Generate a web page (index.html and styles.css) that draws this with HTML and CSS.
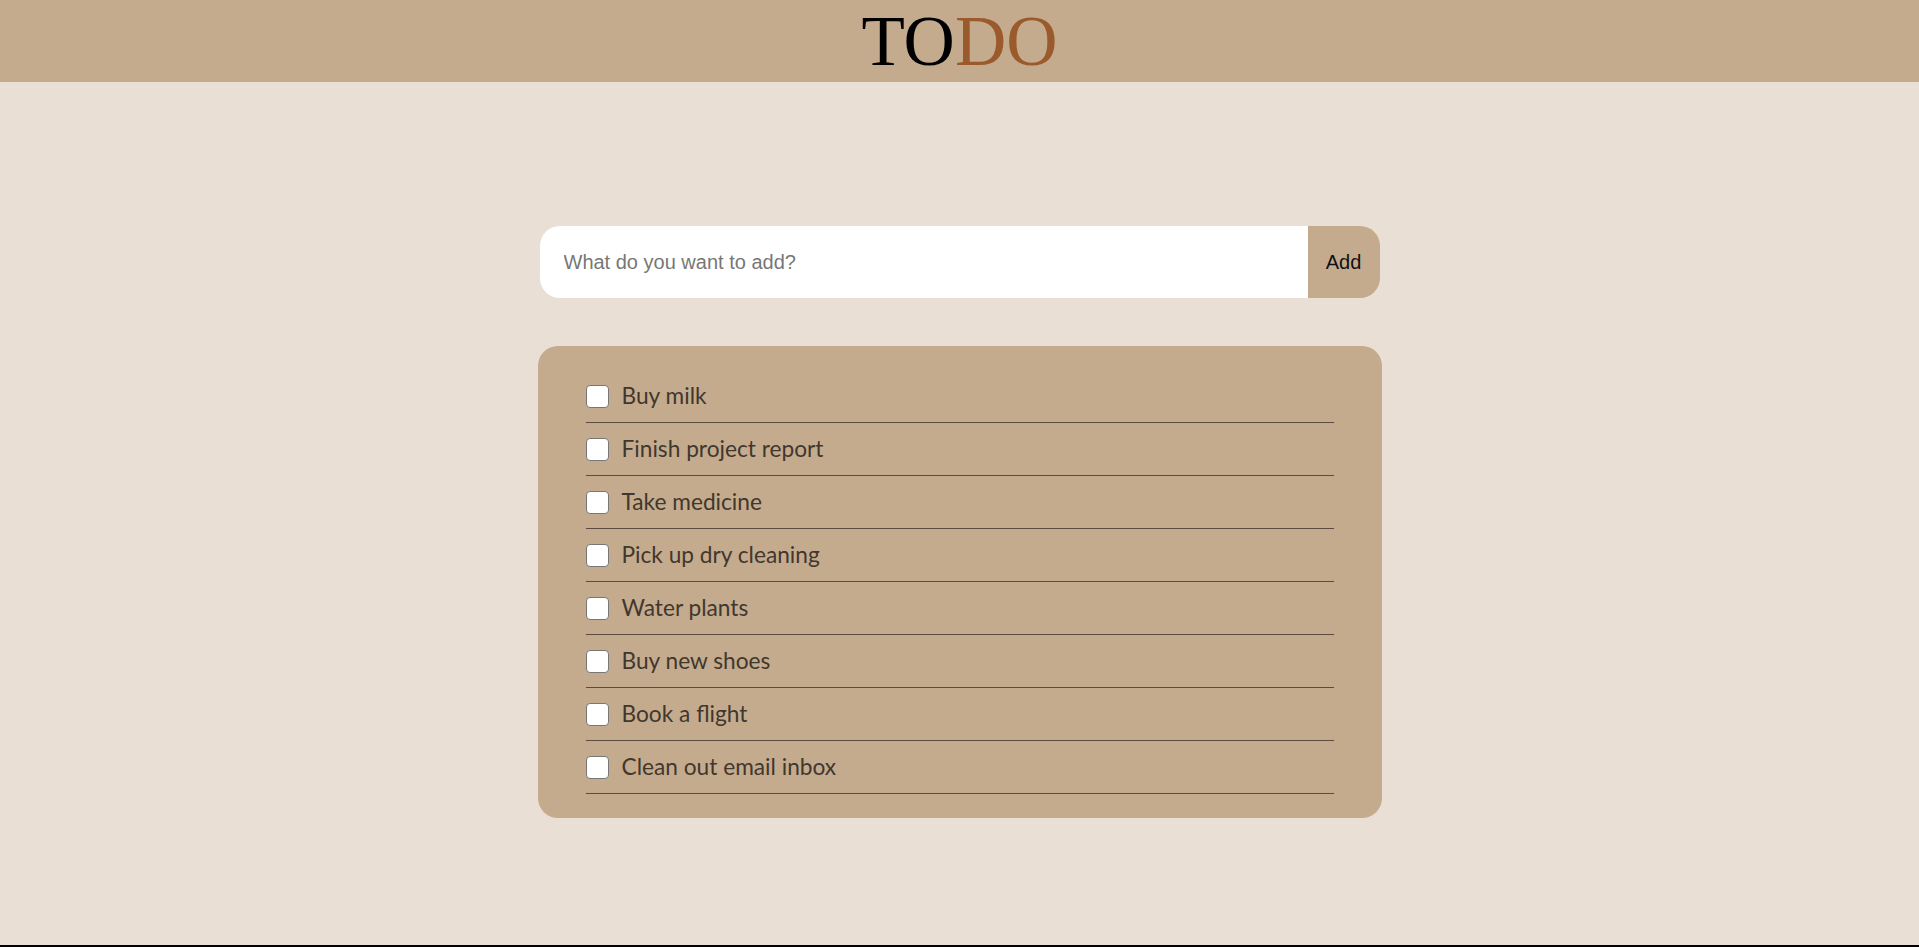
FILE: index.html
```html
<!DOCTYPE html>
<html lang="en">
<head>
<meta charset="utf-8">
<title>TODO</title>
<link rel="stylesheet" href="styles.css">
</head>
<body>
<div class="page">
  <header class="topbar">
    <h1 class="title">TO<span class="accent">DO</span></h1>
  </header>
  <main class="main">
    <form class="add-form">
      <input class="add-input" type="text" placeholder="What do you want to add?">
      <button class="add-btn" type="button">Add</button>
    </form>
    <ul class="todo-list">
      <li class="todo-item"><input class="check" type="checkbox"><span class="label">Buy milk</span></li>
      <li class="todo-item"><input class="check" type="checkbox"><span class="label">Finish project report</span></li>
      <li class="todo-item"><input class="check" type="checkbox"><span class="label">Take medicine</span></li>
      <li class="todo-item"><input class="check" type="checkbox"><span class="label">Pick up dry cleaning</span></li>
      <li class="todo-item"><input class="check" type="checkbox"><span class="label">Water plants</span></li>
      <li class="todo-item"><input class="check" type="checkbox"><span class="label">Buy new shoes</span></li>
      <li class="todo-item"><input class="check" type="checkbox"><span class="label">Book a flight</span></li>
      <li class="todo-item"><input class="check" type="checkbox"><span class="label">Clean out email inbox</span></li>
    </ul>
  </main>
  <footer class="bottom-line"></footer>
</div>
</body>
</html>
```

FILE: styles.css
```css
* { box-sizing: border-box; }
html, body { margin: 0; padding: 0; }
body {
  background: #e9dfd5;
  font-family: "Lato", "Liberation Sans", sans-serif;
}
.page {
  min-height: 100vh;
  display: flex;
  flex-direction: column;
}
.topbar {
  height: 82px;
  background: #c5ab8d;
  display: flex;
  align-items: center;
  justify-content: center;
}
.title {
  margin: 0;
  font-family: "Liberation Serif", "Times New Roman", serif;
  font-weight: 400;
  font-size: 71px;
  line-height: 1;
  color: #000;
  padding-top: 1px;
}
.accent { color: #9b5a2b; }
.main {
  flex: 1;
  display: flex;
  flex-direction: column;
  align-items: center;
  padding-top: 144px;
}
.add-form {
  width: 840px;
  height: 72px;
  display: flex;
  border-radius: 20px;
  overflow: hidden;
}
.add-input {
  flex: 1;
  border: none;
  outline: none;
  background: #fff;
  padding: 0 24px;
  font-family: "Liberation Sans", Arial, sans-serif;
  font-size: 20px;
  color: #333;
}
.add-input::placeholder { color: #777; }
.add-btn {
  width: 72px;
  border: none;
  background: #c5ab8d;
  font-family: "Liberation Sans", Arial, sans-serif;
  font-size: 20px;
  color: #111;
  padding: 0;
  cursor: pointer;
}
.todo-list {
  list-style: none;
  margin: 48px 0 0 0;
  width: 844px;
  background: #c5ab8d;
  border-radius: 20px;
  padding: 24px 48px 24px 48px;
}
.todo-item {
  height: 53px;
  display: flex;
  align-items: center;
  gap: 13px;
  border-bottom: 1px solid #5a4d40;
}
.check {
  appearance: none;
  -webkit-appearance: none;
  margin: 0;
  width: 23px;
  height: 23px;
  background: #fff;
  border: 1.5px solid #777;
  border-radius: 4px;
  flex: none;
}
.label {
  font-size: 22.7px;
  color: #41372f;
  line-height: 1;
}
.bottom-line {
  height: 2px;
  background: #000;
}
```
